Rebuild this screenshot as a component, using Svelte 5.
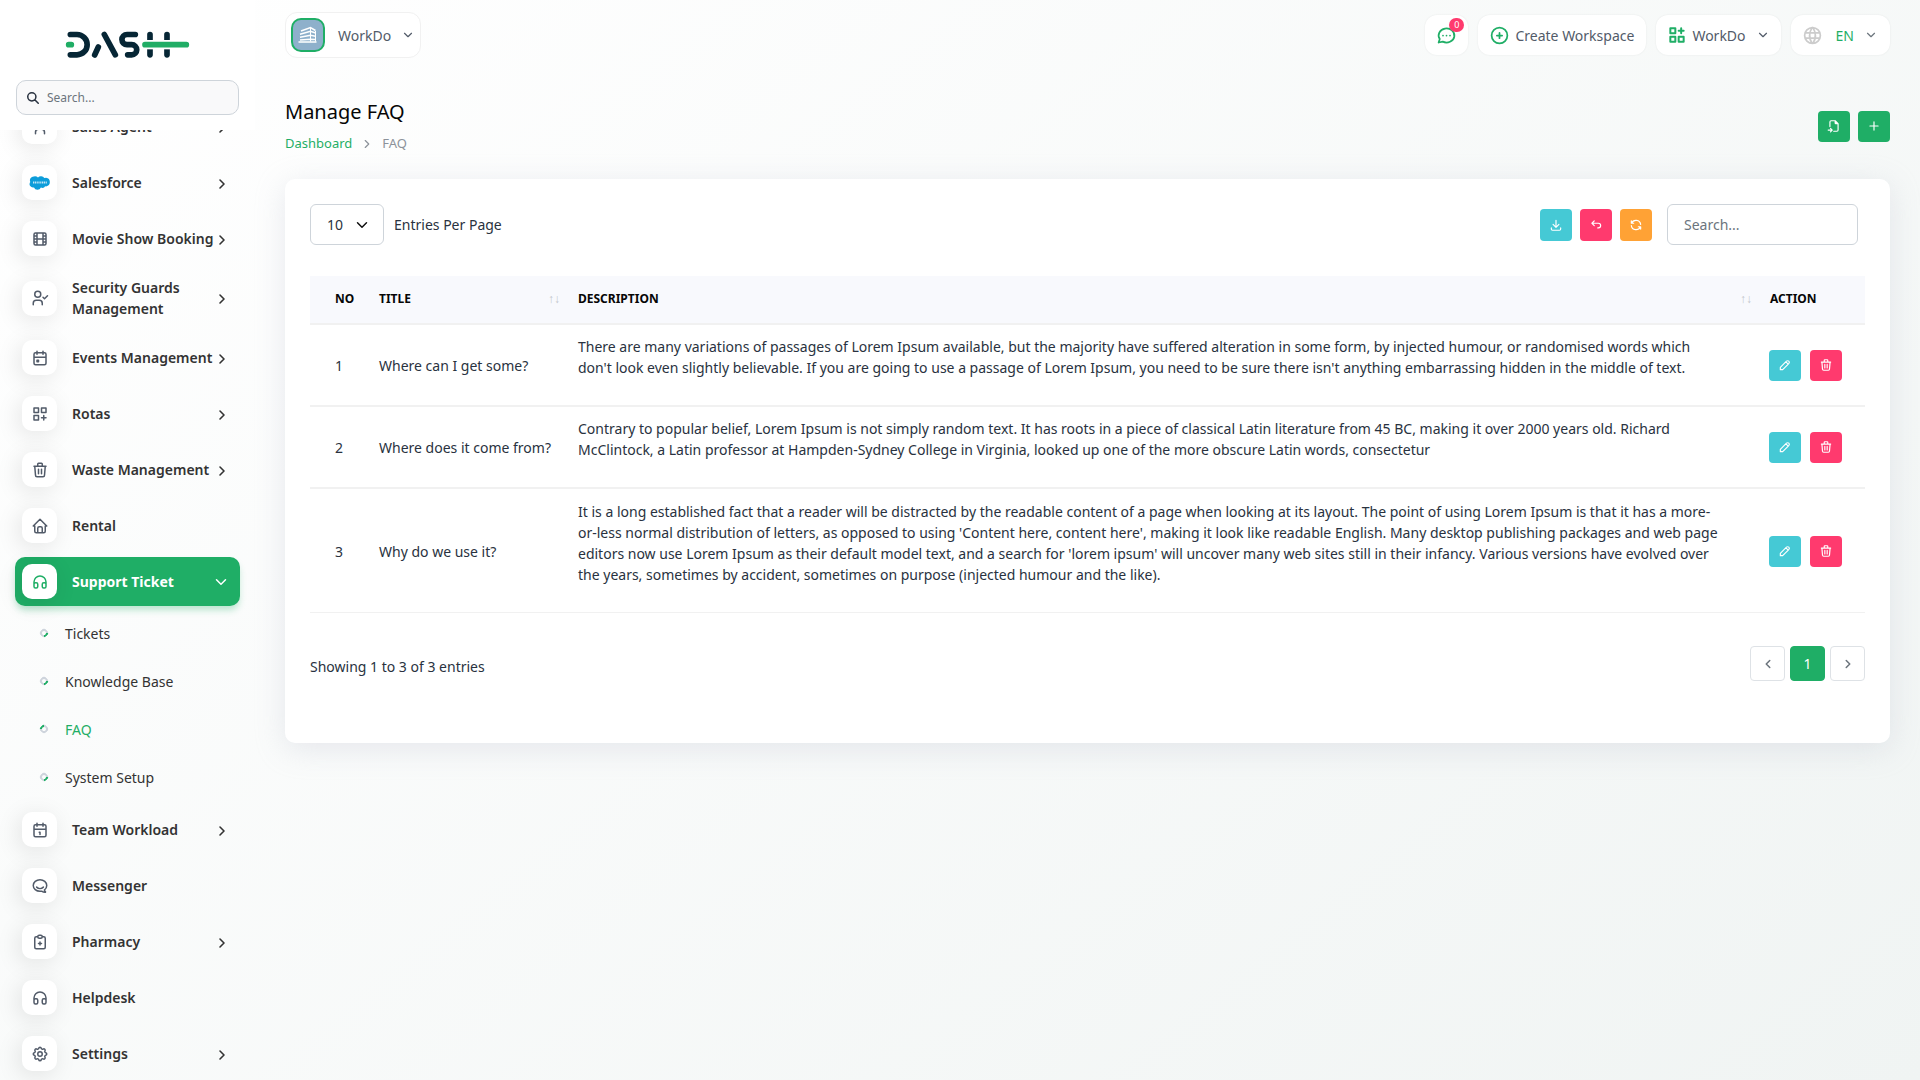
<script>
  const icons = {
    user: 'M8 7a4 4 0 1 0 8 0a4 4 0 0 0-8 0M6 21v-2a4 4 0 0 1 4-4h4a4 4 0 0 1 4 4v2',
    movie: 'M6 4h12a2 2 0 0 1 2 2v12a2 2 0 0 1-2 2H6a2 2 0 0 1-2-2V6a2 2 0 0 1 2-2zM8 4v16M16 4v16M4 8h4M4 16h4M4 12h16M16 8h4M16 16h4',
    guard: 'M5 7a4 4 0 1 0 8 0a4 4 0 0 0-8 0M3 21v-2a4 4 0 0 1 4-4h4a4 4 0 0 1 4 4v2M16 11l2 2 4-4',
    event: 'M6 5h12a2 2 0 0 1 2 2v12a2 2 0 0 1-2 2H6a2 2 0 0 1-2-2V7a2 2 0 0 1 2-2zM16 3v4M8 3v4M4 11h16M8 15h2v2H8z',
    rotas: 'M4 4h6v6H4zM14 4h6v6h-6zM4 14h6v6H4zM14 17h6M17 14v6',
    apps: 'M4 4h6v6H4zM4 14h6v6H4zM14 14h6v6h-6zM14 7h6M17 4v6',
    trash: 'M4 7h16M10 11v6M14 11v6M5 7l1 12a2 2 0 0 0 2 2h8a2 2 0 0 0 2-2l1-12M9 7V4a1 1 0 0 1 1-1h4a1 1 0 0 1 1 1v3',
    home: 'M5 12H3l9-9 9 9h-2M5 12v7a2 2 0 0 0 2 2h10a2 2 0 0 0 2-2v-7M9 21v-6a2 2 0 0 1 2-2h2a2 2 0 0 1 2 2v6',
    headphones: 'M6 13h1a2 2 0 0 1 2 2v3a2 2 0 0 1-2 2H6a2 2 0 0 1-2-2v-3a2 2 0 0 1 2-2zM17 13h1a2 2 0 0 1 2 2v3a2 2 0 0 1-2 2h-1a2 2 0 0 1-2-2v-3a2 2 0 0 1 2-2zM4 15v-3a8 8 0 0 1 16 0v3',
    calendar: 'M6 5h12a2 2 0 0 1 2 2v12a2 2 0 0 1-2 2H6a2 2 0 0 1-2-2V7a2 2 0 0 1 2-2zM16 3v4M8 3v4M4 11h16M11 15h1v3',
    chat: 'M17.8 17.3l.2-.15c1.84-1.43 3-3.5 3-5.8 0-4.28-4.03-7.76-9-7.76s-9 3.48-9 7.76C3 15.64 7.03 19 12 19c.42 0 1.12-.03 2.09-.08 1.26.82 3.1 1.49 4.71 1.49.5 0 .74-.41.42-.83-.49-.6-1.16-1.55-1.42-2.29zM7.5 13.5c2.5 2.5 6.5 2.5 9 0',
    clipboard: 'M9 5H7a2 2 0 0 0-2 2v12a2 2 0 0 0 2 2h10a2 2 0 0 0 2-2V7a2 2 0 0 0-2-2h-2M11 3h2a2 2 0 0 1 0 4h-2a2 2 0 0 1 0-4zM10 14h4M12 12v4',
    settings: 'M10.325 4.317c.426-1.756 2.924-1.756 3.35 0a1.724 1.724 0 0 0 2.573 1.066c1.543-.94 3.31.826 2.37 2.37a1.724 1.724 0 0 0 1.065 2.572c1.756.426 1.756 2.924 0 3.35a1.724 1.724 0 0 0-1.066 2.573c.94 1.543-.826 3.31-2.37 2.37a1.724 1.724 0 0 0-2.572 1.065c-.426 1.756-2.924 1.756-3.35 0a1.724 1.724 0 0 0-2.573-1.066c-1.543.94-3.31-.826-2.37-2.37a1.724 1.724 0 0 0-1.065-2.572c-1.756-.426-1.756-2.924 0-3.35a1.724 1.724 0 0 0 1.066-2.573c-.94-1.543.826-3.31 2.37-2.37 1 .608 2.296.07 2.572-1.065zM9 12a3 3 0 1 0 6 0a3 3 0 0 0-6 0',
    message: 'M3 20l1.3-3.9a9 8 0 1 1 3.4 2.9L3 20M12 12v.01M8 12v.01M16 12v.01',
    circlePlus: 'M3 12a9 9 0 1 0 18 0a9 9 0 0 0-18 0M9 12h6M12 9v6',
    world: 'M3 12a9 9 0 1 0 18 0a9 9 0 0 0-18 0M3.6 9h16.8M3.6 15h16.8M11.5 3a17 17 0 0 0 0 18M12.5 3a17 17 0 0 1 0 18',
    right: 'M9 6l6 6-6 6',
    left: 'M15 6l-6 6 6 6',
    down: 'M6 9l6 6 6-6',
    search: 'M3 10a7 7 0 1 0 14 0a7 7 0 0 0-14 0M21 21l-6-6',
    fileImport: 'M14 3v4a1 1 0 0 0 1 1h4M5 13V5a2 2 0 0 1 2-2h7l5 5v11a2 2 0 0 1-2 2h-5.5M2 19h7M6 16l3 3-3 3',
    plus: 'M12 5v14M5 12h14',
    download: 'M4 17v2a2 2 0 0 0 2 2h12a2 2 0 0 0 2-2v-2M7 11l5 5 5-5M12 4v12',
    undo: 'M9 13L5 9l4-4M5 9h11a4 4 0 0 1 0 8h-1',
    refresh: 'M20 11A8.1 8.1 0 0 0 4.5 9M4 5v4h4M4 13a8.1 8.1 0 0 0 15.5 2M20 19v-4h-4',
    pencil: 'M4 20h4L18.5 9.5a2.8 2.8 0 0 0-4-4L4 16v4M13.5 6.5l4 4'
  };

  const menu = [
    { label: 'Sales Agent', icon: 'user', more: true },
    { label: 'Salesforce', icon: 'salesforce', more: true },
    { label: 'Movie Show Booking', icon: 'movie', more: true },
    { label: 'Security Guards Management', icon: 'guard', more: true },
    { label: 'Events Management', icon: 'event', more: true },
    { label: 'Rotas', icon: 'rotas', more: true },
    { label: 'Waste Management', icon: 'trash', more: true },
    { label: 'Rental', icon: 'home' },
    {
      label: 'Support Ticket',
      icon: 'headphones',
      more: true,
      children: ['Tickets', 'Knowledge Base', 'FAQ', 'System Setup']
    },
    { label: 'Team Workload', icon: 'calendar', more: true },
    { label: 'Messenger', icon: 'chat' },
    { label: 'Pharmacy', icon: 'clipboard', more: true },
    { label: 'Helpdesk', icon: 'headphones' },
    { label: 'Settings', icon: 'settings', more: true }
  ];

  const faqs = [
    {
      title: 'Where can I get some?',
      text: "There are many variations of passages of Lorem Ipsum available, but the majority have suffered alteration in some form, by injected humour, or randomised words which don't look even slightly believable. If you are going to use a passage of Lorem Ipsum, you need to be sure there isn't anything embarrassing hidden in the middle of text."
    },
    {
      title: 'Where does it come from?',
      text: 'Contrary to popular belief, Lorem Ipsum is not simply random text. It has roots in a piece of classical Latin literature from 45 BC, making it over 2000 years old. Richard McClintock, a Latin professor at Hampden-Sydney College in Virginia, looked up one of the more obscure Latin words, consectetur'
    },
    {
      title: 'Why do we use it?',
      text: "It is a long established fact that a reader will be distracted by the readable content of a page when looking at its layout. The point of using Lorem Ipsum is that it has a more-or-less normal distribution of letters, as opposed to using 'Content here, content here', making it look like readable English. Many desktop publishing packages and web page editors now use Lorem Ipsum as their default model text, and a search for 'lorem ipsum' will uncover many web sites still in their infancy. Various versions have evolved over the years, sometimes by accident, sometimes on purpose (injected humour and the like)."
    }
  ];
</script>

{#snippet icon(name, size, width = 2)}
  <svg class="icon" width={size} height={size} viewBox="0 0 24 24" stroke-width={width} aria-hidden="true">
    <path d={icons[name]} />
  </svg>
{/snippet}

{#snippet cloud()}
  <svg width="22" height="16" viewBox="0 0 22 16" aria-hidden="true">
    <path
      fill="#0d9dda"
      d="M9 2.4a4 4 0 0 1 6.300.7a4.300 4.300 0 0 1 1.800-.4a4.400 4.400 0 0 1 0 8.700l-.9-.1a3.300 3.300 0 0 1-4.300 1.300a3.700 3.700 0 0 1-6.900-.2a3.400 3.400 0 0 1-3.700-5.300a4 4 0 0 1 3.500-5.700A4.500 4.500 0 0 1 9 2.400z"
    />
    <path stroke="#fff" stroke-opacity=".75" stroke-width="2" stroke-dasharray="1.200 .6" d="M4 7.500h14" />
  </svg>
{/snippet}

<div class="page">
  <aside class="sidebar">
    <div class="brand">
      <a href="#dashboard" class="logo" aria-label="Dash">
        <svg width="126" height="32" viewBox="192 88 378 96" fill="none" stroke-width="17" stroke-linecap="round" stroke-linejoin="round">
          <g stroke="#062635">
            <path d="M211 104.500h20a30.500 30.500 0 0 1 0 61h-20M284 166l11-24M313 104.500l33 61" />
            <path d="M406 104.500h-25a15 15 0 0 0 0 30.500h14a15 15 0 0 1 0 30.500h-12" />
            <path d="M450 104.500v61M501 104.500v61" />
          </g>
          <path stroke="#fff" stroke-width="28" stroke-linecap="butt" d="M436 135h90" />
          <path stroke="#20ad65" d="M206 135h8M435 135h124" />
        </svg>
      </a>
      <label class="menu-search">
        {@render icon('search', 14, 2.6)}
        <input type="search" placeholder="Search..." aria-label="Search menu" />
      </label>
    </div>
    <nav class="menu" aria-label="Main">
      <ul>
        {#each menu as item}
          <li class:open={item.children}>
            <a class="item" href="#menu">
              <span class="tile">
                {#if item.icon === 'salesforce'}{@render cloud()}{:else}{@render icon(item.icon, 18)}{/if}
              </span>
              <span class="label">{item.label}</span>
              {#if item.more}
                <span class="arrow">{@render icon(item.children ? 'down' : 'right', item.children ? 18 : 16, item.children ? 2 : 2.4)}</span>
              {/if}
            </a>
            {#if item.children}
              <ul class="sub">
                {#each item.children as child}
                  <li><a href="#sub" class:current={child === 'FAQ'}>{child}</a></li>
                {/each}
              </ul>
            {/if}
          </li>
        {/each}
      </ul>
    </nav>
  </aside>

  <main class="main">
    <header class="topbar">
      <button class="profile">
        <svg class="avatar" width="34" height="34" viewBox="0 0 34 34" aria-hidden="true">
          <rect x="1" y="1" width="32" height="32" rx="9" fill="#8eb0cb" stroke="#1fae66" stroke-width="2" />
          <path
            fill="none"
            stroke="#fff"
            stroke-width="1.500"
            d="M10 13l9.500-3.500 5 3M9 16.300l10.500-3 5 1.700M9 19.300l10.500-2 5 .9M9 22l10.500-.8 5 .2M7.500 24h18"
          />
          <path stroke="#fff" stroke-width="1" d="M19.500 9.500v14M24.500 13v10.500" />
        </svg>
        <span>WorkDo</span>
        {@render icon('down', 14)}
      </button>
      <div class="actions">
        <button class="chip chat" aria-label="Messages">
          {@render icon('message', 21)}
          <span class="badge">0</span>
        </button>
        <button class="chip create">{@render icon('circlePlus', 21)}Create Workspace</button>
        <button class="chip work">{@render icon('apps', 20, 2.4)}WorkDo<span class="caret">{@render icon('down', 14)}</span></button>
        <button class="chip lang"><span class="globe">{@render icon('world', 21)}</span>EN<span class="caret">{@render icon('down', 14)}</span></button>
      </div>
    </header>

    <section class="heading">
      <div>
        <h1>Manage FAQ</h1>
        <nav class="crumbs" aria-label="Breadcrumb">
          <a href="#dashboard">Dashboard</a>
          {@render icon('right', 14)}
          <span>FAQ</span>
        </nav>
      </div>
      <div class="tools">
        <button class="square short green" aria-label="Import">{@render icon('fileImport', 14)}</button>
        <button class="square short green" aria-label="Create">{@render icon('plus', 14)}</button>
      </div>
    </section>

    <section class="card">
      <div class="filters">
        <label class="length">
          <select>
            <option>10</option>
            <option>25</option>
            <option>50</option>
          </select>
          Entries Per Page
        </label>
        <div class="tools">
          <button class="square cyan" aria-label="Export">{@render icon('download', 14)}</button>
          <button class="square pink" aria-label="Reset">{@render icon('undo', 14)}</button>
          <button class="square orange" aria-label="Reload">{@render icon('refresh', 14)}</button>
          <input class="find" type="search" placeholder="Search..." aria-label="Search table" />
        </div>
      </div>

      <table>
        <thead>
          <tr>
            <th class="no">No</th>
            <th class="title"><span class="sortable">Title <i>↑↓</i></span></th>
            <th><span class="sortable">Description <i>↑↓</i></span></th>
            <th class="act">Action</th>
          </tr>
        </thead>
        <tbody>
          {#each faqs as faq, index}
            <tr>
              <td>{index + 1}</td>
              <td class="nowrap">{faq.title}</td>
              <td><p>{faq.text}</p></td>
              <td>
                <div class="row-actions">
                  <button class="square short cyan" aria-label="Edit">{@render icon('pencil', 14)}</button>
                  <button class="square short pink" aria-label="Delete">{@render icon('trash', 14)}</button>
                </div>
              </td>
            </tr>
          {/each}
        </tbody>
      </table>

      <footer class="foot">
        <span>Showing 1 to 3 of 3 entries</span>
        <div class="pages">
          <button aria-label="Previous">{@render icon('left', 14, 2.6)}</button>
          <button class="on">1</button>
          <button aria-label="Next">{@render icon('right', 14, 2.6)}</button>
        </div>
      </footer>
    </section>
  </main>
</div>

<style>
  :global(body) {
    margin: 0;
    background: #fff;
  }

  .page,
  .page :global(*) {
    box-sizing: border-box;
  }

  .page {
    display: flex;
    min-height: 100vh;
    font-family: 'Noto Sans', 'Open Sans', sans-serif;
    font-size: 14px;
    line-height: 21px;
    color: #293240;
    background: linear-gradient(141deg, #fff 3%, #f0f4f3 100%);
  }

  ul {
    list-style: none;
    margin: 0;
    padding: 0;
  }

  a {
    color: inherit;
    text-decoration: none;
  }

  button,
  input,
  select {
    font: inherit;
    color: inherit;
  }

  button {
    border: 0;
    padding: 0;
    background: none;
    cursor: pointer;
  }

  .icon {
    display: block;
    flex: none;
    fill: none;
    stroke: currentColor;
    stroke-linecap: round;
    stroke-linejoin: round;
  }

  .sidebar {
    display: flex;
    flex-direction: column;
    flex: none;
    width: 255px;
    height: 100vh;
    position: sticky;
    top: 0;
  }

  .brand {
    position: relative;
    z-index: 1;
    flex: none;
    padding: 29px 16px 15px;
    background: #fff;
  }

  .logo {
    display: flex;
    justify-content: center;
    margin: 0 2px 19px 0;
  }

  .menu-search {
    display: flex;
    align-items: center;
    gap: 7px;
    height: 35px;
    padding: 0 9px;
    border: 1px solid #ced4da;
    border-radius: 10px;
    background: #f9f9fa;
  }

  .menu-search input {
    flex: 1;
    min-width: 0;
    border: 0;
    padding: 0;
    background: none;
    font-size: 12px;
    outline: 0;
  }

  input::placeholder {
    color: #6c757d;
    opacity: 1;
  }

  .menu {
    flex: 1;
    min-height: 0;
    overflow: hidden;
    padding: 0 15px;
  }

  .menu > ul {
    margin-top: -28px;
  }

  .menu > ul > li {
    margin-bottom: 7px;
  }

  .menu > ul > .open {
    margin-bottom: 4px;
  }

  .item {
    display: flex;
    align-items: center;
    min-height: 49px;
    padding: 7px 12px 7px 7px;
    border-radius: 10px;
    font-weight: 600;
    color: #333;
  }

  .tile {
    display: grid;
    place-items: center;
    flex: none;
    width: 35px;
    height: 35px;
    margin-right: 15px;
    border-radius: 10px;
    background: #fff;
    color: #525b69;
    box-shadow: -3px 4px 23px rgba(0, 0, 0, 0.1);
  }

  .label {
    flex: 1;
    margin-right: -4px;
  }

  .arrow {
    flex: none;
    margin-right: -2px;
    padding-top: 2px;
  }

  .open .arrow {
    padding-top: 0;
  }

  .open .item {
    font-weight: 700;
    color: #fff;
    background: #1fae66;
    box-shadow: 0 5px 7px -1px rgba(31, 174, 102, 0.3);
  }

  .open .tile {
    color: #1fae66;
  }

  .sub {
    padding-top: 3px;
  }

  .sub a {
    display: flex;
    align-items: center;
    gap: 17px;
    height: 48px;
    padding-left: 25px;
    color: #333;
  }

  .sub a::before {
    content: '';
    box-sizing: border-box;
    width: 8px;
    height: 8px;
    border: 2px solid #ced4dc;
    border-right-color: #1fae66;
    border-radius: 50%;
    transform: rotate(45deg);
  }

  .sub .current {
    color: #1fae66;
  }

  .sub .current::before {
    transform: rotate(225deg);
  }

  .main {
    flex: 1;
    min-width: 0;
    padding: 12px 30px 30px;
  }

  .topbar {
    display: flex;
    align-items: center;
    justify-content: space-between;
    color: #525b69;
  }

  .profile {
    display: flex;
    align-items: center;
    height: 46px;
    padding: 0 5px;
    border: 1px solid #f1f1f1;
    border-radius: 12px;
    background: #fff;
  }

  .avatar {
    margin-right: 13px;
  }

  .profile span {
    margin-right: 10px;
  }

  .actions {
    display: flex;
    gap: 10px;
  }

  .chip {
    position: relative;
    display: flex;
    align-items: center;
    height: 40px;
    padding: 0 11px;
    gap: 5px;
    border-radius: 12px;
    background: #fff;
    box-shadow: 0 0 2px rgba(0, 0, 0, 0.08);
  }

  .create,
  .lang {
    padding: 0 12px 0 11px;
  }

  .chip > .icon {
    color: #1fae66;
  }

  .badge {
    position: absolute;
    top: 3px;
    right: 4px;
    width: 15px;
    height: 14px;
    border-radius: 7px;
    font-size: 9px;
    line-height: 14px;
    color: #fff;
    background: #ff3a6e;
  }

  .caret {
    margin-left: 5px;
  }

  .globe {
    margin-right: 8px;
    color: #ccc;
  }

  .lang {
    color: #1fae66;
  }

  .lang .caret {
    color: #6c757d;
  }

  .heading {
    display: flex;
    align-items: center;
    justify-content: space-between;
    margin: 40px 0 25px;
  }

  h1 {
    margin: 0 0 8px;
    font-size: 20px;
    line-height: 28px;
    font-weight: 400;
    color: #060606;
  }

  .crumbs {
    display: flex;
    align-items: center;
    gap: 8px;
    margin-bottom: 1px;
    font-size: 13px;
    line-height: 19px;
    color: #8c929a;
  }

  .crumbs a {
    color: #1fae66;
  }

  .tools {
    display: flex;
    align-items: center;
    gap: 8px;
  }

  .square {
    display: grid;
    place-items: center;
    width: 32px;
    height: 32px;
    border-radius: 4px;
    color: #fff;
  }

  .short {
    height: 31px;
  }

  .green {
    background: #1fae66;
  }

  .cyan {
    background: #45c9d5;
  }

  .pink {
    background: #ff3a6e;
  }

  .orange {
    background: #ffa235;
  }

  .card {
    padding: 25px 25px 62px;
    border-radius: 10px;
    background: #fff;
    box-shadow: 0 6px 30px rgba(182, 186, 203, 0.3);
  }

  .filters {
    display: flex;
    align-items: center;
    justify-content: space-between;
    margin-bottom: 31px;
    padding-right: 7px;
  }

  .length {
    display: flex;
    align-items: center;
    gap: 10px;
  }

  select,
  .find {
    height: 41px;
    border: 1px solid #ced4da;
    border-radius: 6px;
    background: #fff;
    padding: 0 16px;
  }

  select {
    width: 74px;
    appearance: none;
    background: #fff url("data:image/svg+xml,%3Csvg xmlns='http://www.w3.org/2000/svg' viewBox='0 0 16 16' fill='none' stroke='%23111' stroke-width='2' stroke-linecap='round' stroke-linejoin='round'%3E%3Cpath d='M2 5l6 6 6-6'/%3E%3C/svg%3E") no-repeat right 15px center / 12px 12px;
  }

  .find {
    width: 191px;
    margin-left: 7px;
  }

  table {
    width: 100%;
    table-layout: fixed;
    border-collapse: separate;
    border-spacing: 0;
  }

  th {
    padding: 12px 12px 14px;
    text-align: left;
    text-transform: uppercase;
    font-size: 12px;
    font-weight: 700;
    color: #060606;
    background: #f8f9fd;
    border-bottom: 2px solid #f1f1f1;
  }

  td {
    padding: 11px 12px;
    border-bottom: 2px solid #f1f1f1;
  }

  tbody tr:last-child td {
    padding-top: 12px;
    border-bottom-width: 1px;
  }

  th:first-child,
  td:first-child {
    padding-left: 25px;
    padding-right: 0;
  }

  .no {
    width: 57px;
  }

  .title {
    width: 199px;
  }

  .act {
    width: 107px;
  }

  .nowrap {
    white-space: nowrap;
  }

  .sortable {
    display: flex;
    justify-content: space-between;
    margin-right: -6px;
  }

  .sortable i {
    font-style: normal;
    font-weight: 400;
    color: #c3c6cc;
  }

  td p {
    max-width: 1146px;
    margin: 0 0 16px;
  }

  .row-actions {
    display: flex;
    gap: 9px;
    margin-left: -1px;
  }

  .foot {
    display: flex;
    align-items: end;
    justify-content: space-between;
    margin-top: 33px;
  }

  .foot > span {
    padding-bottom: 4px;
  }

  .pages {
    display: flex;
    gap: 5px;
  }

  .pages button {
    display: grid;
    place-items: center;
    width: 35px;
    height: 35px;
    border: 1px solid #dee2e6;
    border-radius: 4px;
    color: #6c757d;
    background: #fff;
  }

  .pages .on {
    border-color: #1fae66;
    color: #fff;
    background: #1fae66;
  }
</style>
